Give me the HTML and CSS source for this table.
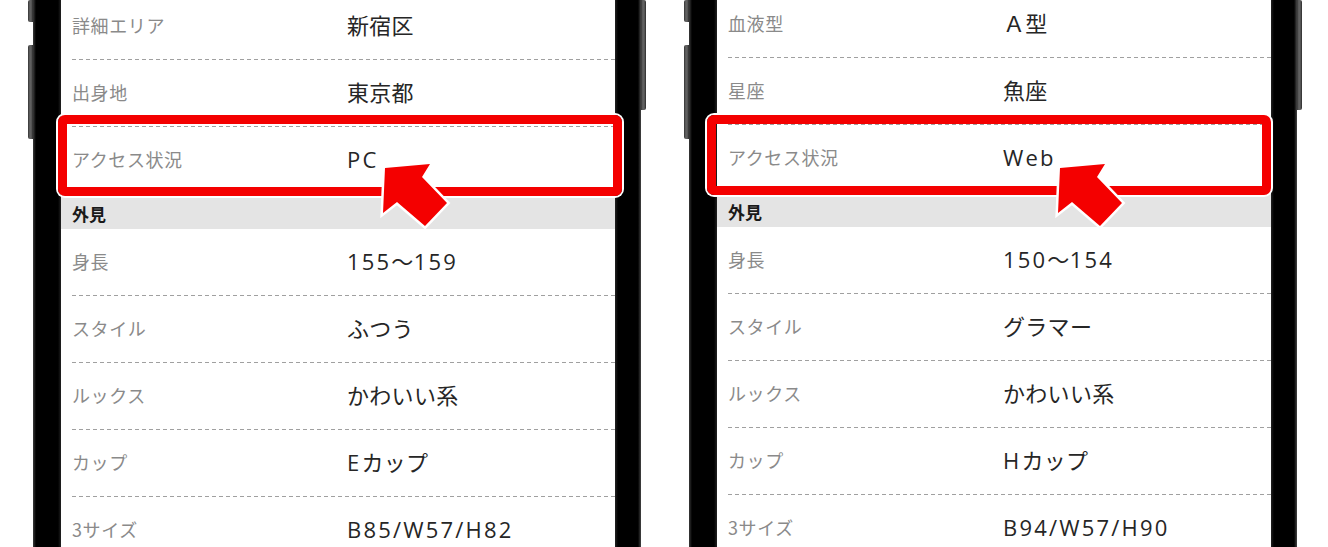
FILE: index.html
```html
<!DOCTYPE html>
<html lang="ja">
<head>
<meta charset="utf-8">
<title>Profile</title>
<link rel="stylesheet" href="styles.css">
</head>
<body>
<div class="stage">
  <div class="phone">
    <div class="side side--left"><span class="btn btn--short"></span><span class="btn btn--long"></span></div>
    <div class="bezel bezel--left"></div>
    <div class="screen">
      <div class="list list--a">
        <div class="row"><span class="label">詳細エリア</span><span class="value">新宿区</span></div>
        <div class="row"><span class="label">出身地</span><span class="value">東京都</span></div>
        <div class="row row--last"><span class="label">アクセス状況</span><span class="value"><span class="lat">PC</span></span></div>
        <div class="section">外見</div>
        <div class="row"><span class="label">身長</span><span class="value"><span class="lat">155</span>〜<span class="lat">159</span></span></div>
        <div class="row"><span class="label">スタイル</span><span class="value">ふつう</span></div>
        <div class="row"><span class="label">ルックス</span><span class="value">かわいい系</span></div>
        <div class="row"><span class="label">カップ</span><span class="value"><span class="lat">E</span>カップ</span></div>
        <div class="row"><span class="label">3サイズ</span><span class="value"><span class="lat">B85/W57/H82</span></span></div>
      </div>
    </div>
    <div class="bezel bezel--right"></div>
    <div class="side side--right"><span class="btn btn--power"></span></div>
    <div class="highlight highlight--a"></div>
    <svg class="arrow arrow--a" viewBox="-6 -8 76 74" width="76" height="74"><polygon points="0,0 45,-4 37,9 62,35 40,58 12,34 -2,45"/></svg>
  </div>
  <div class="phone">
    <div class="side side--left"><span class="btn btn--short"></span><span class="btn btn--long"></span></div>
    <div class="bezel bezel--left"></div>
    <div class="screen">
      <div class="list list--b">
        <div class="row"><span class="label">血液型</span><span class="value">Ａ型</span></div>
        <div class="row"><span class="label">星座</span><span class="value">魚座</span></div>
        <div class="row row--last"><span class="label">アクセス状況</span><span class="value"><span class="lat">Web</span></span></div>
        <div class="section">外見</div>
        <div class="row"><span class="label">身長</span><span class="value"><span class="lat">150</span>〜<span class="lat">154</span></span></div>
        <div class="row"><span class="label">スタイル</span><span class="value">グラマー</span></div>
        <div class="row"><span class="label">ルックス</span><span class="value">かわいい系</span></div>
        <div class="row"><span class="label">カップ</span><span class="value"><span class="lat">H</span>カップ</span></div>
        <div class="row"><span class="label">3サイズ</span><span class="value"><span class="lat">B94/W57/H90</span></span></div>
      </div>
    </div>
    <div class="bezel bezel--right"></div>
    <div class="side side--right"><span class="btn btn--power"></span></div>
    <div class="highlight highlight--b"></div>
    <svg class="arrow arrow--b" viewBox="-6 -8 76 74" width="76" height="74"><polygon points="0,0 45,-4 37,9 62,35 40,58 12,34 -2,45"/></svg>
  </div>
</div>
</body>
</html>
```
FILE: styles.css
```css
html, body {
  margin: 0;
  padding: 0;
  background: #fff;
}
body {
  width: 1328px;
  height: 547px;
  overflow: hidden;
  font-family: "Noto Sans CJK JP", sans-serif;
}
.stage {
  display: flex;
  gap: 38px;
  padding-left: 28px;
  height: 547px;
}
.phone {
  position: relative;
  display: flex;
  height: 547px;
}
.side {
  width: 5px;
  display: flex;
  flex-direction: column;
  gap: 23px;
}
.btn {
  display: block;
  width: 5px;
  background: linear-gradient(to right, #333 0, #666 40%, #555 70%, #2a2a2a 100%);
}
.side--left .btn { border-radius: 2px 0 0 2px; }
.side--right .btn { border-radius: 0 2px 2px 0; }
.btn--short { height: 22px; }
.btn--long { height: 94px; }
.btn--power { height: 110px; }
.bezel {
  background: #000;
}
.bezel--left {
  width: 28px;
  background: linear-gradient(to right, #3a3a3a 0, #000 3px, #000 calc(100% - 3px), #222 100%);
}
.bezel--right {
  width: 26px;
  background: linear-gradient(to right, #222 0, #000 3px, #000 calc(100% - 3px), #444 100%);
}
.screen {
  width: 554px;
  height: 547px;
  overflow: hidden;
  background: #fff;
}
.list--a { margin-top: -7px; }
.list--b { margin-top: -9px; }
.row {
  box-sizing: border-box;
  height: 67px;
  margin-left: 11px;
  display: flex;
  align-items: center;
  background: repeating-linear-gradient(to right, #a0a0a0 0 4px, transparent 4px 7px) left bottom / 100% 1px no-repeat;
}
.row--last { background: none; }
.label {
  width: 275px;
  flex: none;
  font-size: 18px;
  line-height: 1;
  letter-spacing: 0.6px;
  color: #8a8a8a;
  padding-bottom: 3px;
}
.value {
  font-family: "Open Sans", "Noto Sans CJK JP", sans-serif;
  font-size: 22px;
  line-height: 1;
  letter-spacing: 0.3px;
  color: #262626;
  padding-bottom: 4px;
}
.lat {
  letter-spacing: 2.2px;
}
.section {
  box-sizing: border-box;
  height: 35px;
  padding: 4px 0 0 11px;
  display: flex;
  align-items: center;
  background: #e4e4e4;
  font-size: 17px;
  font-weight: bold;
  color: #1a1a1a;
}
.highlight {
  position: absolute;
  top: 115px;
  width: 564px;
  box-sizing: border-box;
  border: 9px solid #f40000;
  border-radius: 7px;
  box-shadow: 0 0 0 2px #fff;
}
.highlight--a { left: 30px; height: 81px; }
.highlight--b { left: 23px; height: 80px; }
.arrow {
  position: absolute;
  top: 160px;
  overflow: visible;
}
.arrow polygon {
  fill: #f40000;
  stroke: #fff;
  stroke-width: 5px;
  stroke-linejoin: miter;
  paint-order: stroke;
}
.arrow--a { left: 351px; }
.arrow--b { left: 370px; }
```
